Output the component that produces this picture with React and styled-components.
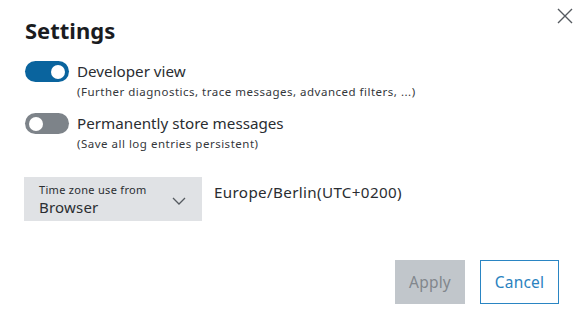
import React from "react";
import styled, { createGlobalStyle } from "styled-components";

const Global = createGlobalStyle`
  html, body { margin: 0; padding: 0; background: #fff; }
  body { font-family: "Noto Sans", "Open Sans", sans-serif; color: #1f2226; }
  * { box-sizing: border-box; }
`;

const Dialog = styled.div`
  width: 585px;
  height: 327px;
  background: #fff;
  padding: 0 24px 0 25px;
  display: flex;
  flex-direction: column;
`;

const Header = styled.div`
  display: flex;
  justify-content: space-between;
  align-items: flex-start;
  height: 61px;
`;

const Title = styled.h1`
  margin: 15px 0 0;
  font-size: 22px;
  line-height: 30px;
  font-weight: 700;
  color: #1a1c1f;
`;

const CloseButton = styled.button`
  margin: 7px -13px 0 0;
  width: 18px;
  height: 18px;
  padding: 0;
  border: none;
  background: transparent;
  display: flex;
  align-items: center;
  justify-content: center;
  cursor: pointer;
`;

const Options = styled.div`
  display: flex;
  flex-direction: column;
  gap: 14px;
`;

const OptionRow = styled.div`
  display: flex;
  gap: 8px;
  align-items: flex-start;
`;

const Toggle = styled.div`
  width: 44px;
  height: 21px;
  border-radius: 11px;
  background: ${(p) => (p.$on ? "#0a649e" : "#7d8389")};
  position: relative;
  flex-shrink: 0;
  &::after {
    content: "";
    position: absolute;
    top: 3.5px;
    left: ${(p) => (p.$on ? "26px" : "4px")};
    width: 14px;
    height: 14px;
    border-radius: 50%;
    background: #fff;
  }
`;

const OptionText = styled.div`
  display: flex;
  flex-direction: column;
`;

const OptionLabel = styled.span`
  font-size: 15.2px;
  line-height: 20px;
  color: #2a2d31;
`;

const OptionSub = styled.span`
  margin-top: 3px;
  font-size: 11.5px;
  line-height: 15px;
  letter-spacing: 0.5px;
  color: #34373b;
`;

const ZoneRow = styled.div`
  display: flex;
  align-items: flex-start;
  gap: 12px;
  margin-top: 26px;
`;

const Select = styled.div`
  width: 178px;
  height: 44px;
  margin-left: -1px;
  background: #e0e2e5;
  padding: 3px 16px 0 15px;
  display: flex;
  align-items: center;
  justify-content: space-between;
`;

const SelectText = styled.div`
  display: flex;
  flex-direction: column;
`;

const SelectLabel = styled.span`
  font-size: 11px;
  line-height: 14px;
  letter-spacing: 0.3px;
  color: #2a2d31;
`;

const SelectValue = styled.span`
  font-size: 15px;
  line-height: 21px;
  letter-spacing: 0.2px;
  color: #2a2d31;
`;

const ZoneValue = styled.span`
  font-size: 15.2px;
  line-height: 20px;
  margin-top: 5px;
  color: #2a2d31;
  letter-spacing: 0.35px;
`;

const Footer = styled.div`
  display: flex;
  justify-content: flex-end;
  gap: 15px;
  margin-top: 39px;
  padding-right: 2px;
`;

const Button = styled.button`
  height: 44px;
  min-width: ${(p) => (p.$secondary ? "79px" : "70px")};
  padding: 0 12px;
  font-family: inherit;
  font-size: 15.5px;
  letter-spacing: 0.2px;
  border: ${(p) => (p.$secondary ? "1.5px solid #2a85c3" : "none")};
  background: ${(p) => (p.$secondary ? "#fff" : "#c1c6cb")};
  color: ${(p) => (p.$secondary ? "#2a82c0" : "#82878d")};
  cursor: ${(p) => (p.disabled ? "default" : "pointer")};
`;

export default function App() {
  return (
    <>
      <Global />
      <Dialog>
        <Header>
          <Title>Settings</Title>
          <CloseButton aria-label="Close">
            <svg width="16" height="16" viewBox="0 0 16 16">
              <path d="M1 1L15 15M15 1L1 15" stroke="#555a60" strokeWidth="1.4" fill="none" />
            </svg>
          </CloseButton>
        </Header>
        <Options>
          <OptionRow>
            <Toggle $on />
            <OptionText>
              <OptionLabel>Developer view</OptionLabel>
              <OptionSub>(Further diagnostics, trace messages, advanced filters, ...)</OptionSub>
            </OptionText>
          </OptionRow>
          <OptionRow>
            <Toggle />
            <OptionText>
              <OptionLabel>Permanently store messages</OptionLabel>
              <OptionSub>(Save all log entries persistent)</OptionSub>
            </OptionText>
          </OptionRow>
        </Options>
        <ZoneRow>
          <Select>
            <SelectText>
              <SelectLabel>Time zone use from</SelectLabel>
              <SelectValue>Browser</SelectValue>
            </SelectText>
            <svg width="14" height="8" viewBox="0 0 14 8">
              <path d="M1 1L7 7L13 1" stroke="#555a60" strokeWidth="1.3" fill="none" />
            </svg>
          </Select>
          <ZoneValue>Europe/Berlin(UTC+0200)</ZoneValue>
        </ZoneRow>
        <Footer>
          <Button disabled>Apply</Button>
          <Button $secondary>Cancel</Button>
        </Footer>
      </Dialog>
    </>
  );
}
